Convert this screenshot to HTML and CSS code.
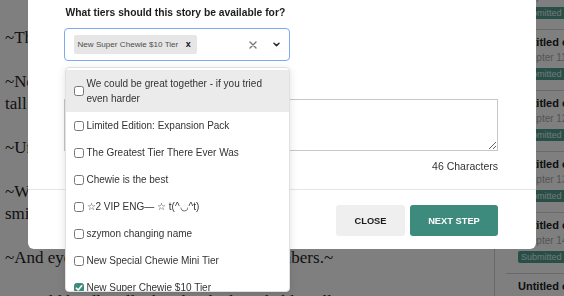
FILE: index.html
```html
<!DOCTYPE html>
<html lang="en">
<head>
<meta charset="utf-8">
<title>Tiers</title>
<link rel="stylesheet" href="styles.css">
</head>
<body>
<div class="page">
  <main class="article">
    <p>~The night was quiet, save for the wind in the trees.~</p>
    <p>~Nobody had expected the stranger, least of all the<br>tall man who stood by the gate.~</p>
    <p>~Until the lanterns flickered, nobody spoke a word.~</p>
    <p>~When she turned to face him, there was a strange<br>smile upon her lips.~</p>
    <p>~And eyes that glittered like the dying embers.~</p>
    <p>~I could hardly tell what the shadows held at all.~</p>
  </main>
  <aside class="sidebar">
    <ul class="chapters">
      <li class="chapter"><div class="chapter-title">Untitled chapter</div><div class="chapter-num">Chapter 10</div><span class="badge">Submitted</span></li>
      <li class="chapter"><div class="chapter-title">Untitled chapter</div><div class="chapter-num">Chapter 11</div><span class="badge">Submitted</span></li>
      <li class="chapter"><div class="chapter-title">Untitled chapter</div><div class="chapter-num">Chapter 12</div><span class="badge">Submitted</span></li>
      <li class="chapter"><div class="chapter-title">Untitled chapter</div><div class="chapter-num">Chapter 13</div><span class="badge">Submitted</span></li>
      <li class="chapter"><div class="chapter-title">Untitled chapter</div><div class="chapter-num">Chapter 14</div><span class="badge">Submitted</span></li>
      <li class="chapter"><div class="chapter-title">Untitled chapter</div><div class="chapter-num">Chapter 15</div><span class="badge">Submitted</span></li>
    </ul>
  </aside>
</div>
<div class="overlay"></div>
<div class="modal">
  <div class="modal-body">
    <div class="question">What tiers should this story be available for?</div>
    <div class="select-wrap">
      <div class="select">
        <div class="chip"><span class="chip-label">New Super Chewie $10 Tier</span><span class="chip-remove">x</span></div>
        <div class="spacer"></div>
        <svg class="clear" viewBox="0 0 8 8"><path d="M1 1 L7 7 M7 1 L1 7" stroke="#777" stroke-width="1.4" fill="none" stroke-linecap="round"/></svg>
        <svg class="chevron" viewBox="0 0 7 5"><path d="M1 1.2 L3.5 3.6 L6 1.2" stroke="#2a2a2a" stroke-width="1.5" fill="none" stroke-linecap="round" stroke-linejoin="round"/></svg>
      </div>
      <ul class="menu">
        <li class="option active"><span class="box"></span><span class="opt-text">We could be great together - if you tried even harder</span></li>
        <li class="option"><span class="box"></span><span class="opt-text">Limited Edition: Expansion Pack</span></li>
        <li class="option"><span class="box"></span><span class="opt-text">The Greatest Tier There Ever Was</span></li>
        <li class="option"><span class="box"></span><span class="opt-text">Chewie is the best</span></li>
        <li class="option"><span class="box"></span><span class="opt-text">☆2 VIP ENG— ☆ t(^◡^t)</span></li>
        <li class="option"><span class="box"></span><span class="opt-text">szymon changing name</span></li>
        <li class="option"><span class="box"></span><span class="opt-text">New Special Chewie Mini Tier</span></li>
        <li class="option"><span class="box checked"><svg viewBox="0 0 8 8"><path d="M1.4 4.2 L3.2 6 L6.7 1.8" stroke="#fff" stroke-width="1.6" fill="none" stroke-linecap="round" stroke-linejoin="round"/></svg></span><span class="opt-text">New Super Chewie $10 Tier</span></li>
      </ul>
    </div>
    <textarea class="notes"></textarea>
    <div class="count">46 Characters</div>
  </div>
  <div class="modal-footer">
    <button class="btn btn-close">CLOSE</button>
    <button class="btn btn-next">NEXT STEP</button>
  </div>
</div>
</body>
</html>
```
FILE: styles.css
```css
* { box-sizing: border-box; }
html, body { margin: 0; padding: 0; }
body {
  width: 564px;
  height: 296px;
  overflow: hidden;
  background: #fff;
  font-family: "Liberation Sans", Arial, sans-serif;
}
.page {
  display: flex;
  height: 296px;
  overflow: hidden;
}
.article {
  width: 495px;
  flex: none;
  overflow: hidden;
  border-right: 1px solid #cfcfcf;
  padding: 27px 0 0 5px;
  font-family: "Liberation Serif", "Times New Roman", serif;
  font-size: 17px;
  line-height: 22px;
  color: #1e1e1e;
}
.article p { margin: 0 0 22px; white-space: nowrap; }
.sidebar { flex: 1; padding-left: 11px; overflow: hidden; }
.chapters { list-style: none; margin: -32px 0 0; padding: 0; }
.chapter {
  height: 61px;
  border-top: 1px solid #d4d4d4;
  padding: 5px 0 0 12px;
}
.chapter-title {
  font-size: 11px;
  font-weight: bold;
  line-height: 14px;
  color: #1c1c1c;
  white-space: nowrap;
}
.chapter-num {
  margin-top: 1px;
  font-size: 10px;
  line-height: 15px;
  color: #a8a8a8;
  white-space: nowrap;
}
.badge {
  display: block;
  width: max-content;
  margin-top: 3px;
  height: 12px;
  line-height: 12px;
  padding: 0 4px 0 3px;
  font-size: 9px;
  background: #4f9d8e;
  color: #e6efed;
  border-radius: 2px;
  white-space: nowrap;
}
.overlay {
  position: fixed;
  inset: 0;
  background: rgba(0, 0, 0, 0.5);
}
.modal {
  position: fixed;
  top: 0;
  left: 28px;
  width: 508px;
  background: #fff;
  border-radius: 0 0 6px 6px;
}
.modal-body { padding: 6px 38px 16px 36px; }
.question {
  font-size: 10.3px;
  font-weight: bold;
  line-height: 14px;
  color: #1d1d1d;
  margin: 0 0 8px 1.5px;
}
.select-wrap { position: relative; width: 226px; }
.select {
  height: 33px;
  border: 1.5px solid #7ea9ef;
  border-radius: 4px;
  display: flex;
  align-items: center;
  padding: 0 9px 0 8.5px;
}
.chip {
  display: flex;
  align-items: center;
  height: 19px;
  background: #e6e6e6;
  border-radius: 2px;
  padding: 0 6.5px 0 4px;
}
.chip-label { font-size: 8.1px; color: #4d4d4d; white-space: nowrap; }
.chip-remove { font-size: 9px; font-weight: bold; color: #111; margin-left: 7.5px; line-height: 9px; }
.spacer { flex: 1; }
.clear { width: 8px; height: 8px; margin-right: 16.5px; }
.chevron { width: 7px; height: 5px; }
.menu {
  position: absolute;
  top: 39px;
  left: 1px;
  width: 225px;
  height: 225px;
  margin: 0;
  padding: 2px 0 0;
  list-style: none;
  background: #fff;
  border: 1px solid #e0e0e0;
  border-radius: 4px;
  box-shadow: 0 2px 8px rgba(0, 0, 0, 0.12);
  overflow: hidden;
  z-index: 2;
}
.option {
  display: flex;
  align-items: center;
  padding: 6px 12px 6px 8px;
  font-size: 10px;
  line-height: 15px;
  color: #333;
}
.option.active { background: #ebebeb; }
.box {
  flex: none;
  width: 10px;
  height: 10px;
  border: 1px solid #767676;
  border-radius: 2.5px;
  margin-right: 2.5px;
  background: #fff;
  display: flex;
}
.box svg { width: 8px; height: 8px; }
.box.checked { background: #3d8b7d; border-color: #3d8b7d; }
.notes {
  display: block;
  width: 434px;
  height: 52px;
  margin: 38px 0 0;
  border: 1px solid #c7c7c7;
  border-radius: 0;
  resize: vertical;
  padding: 4px;
  font: 10px "Liberation Sans", Arial, sans-serif;
}
.count {
  margin-top: 8px;
  text-align: right;
  font-size: 10.5px;
  line-height: 14px;
  color: #333;
}
.modal-footer {
  border-top: 1px solid #e6e6e6;
  padding: 15px 38px 13px 36px;
  display: flex;
  justify-content: flex-end;
  gap: 5px;
}
.btn {
  height: 31px;
  border: 0;
  border-radius: 3px;
  font-family: "Liberation Sans", Arial, sans-serif;
  font-size: 9.3px;
  font-weight: bold;
  padding: 0;
}
.btn-close { width: 69px; background: #efefef; color: #1a1a1a; }
.btn-next { width: 88px; background: #3d8b7d; color: #fff; }
```
